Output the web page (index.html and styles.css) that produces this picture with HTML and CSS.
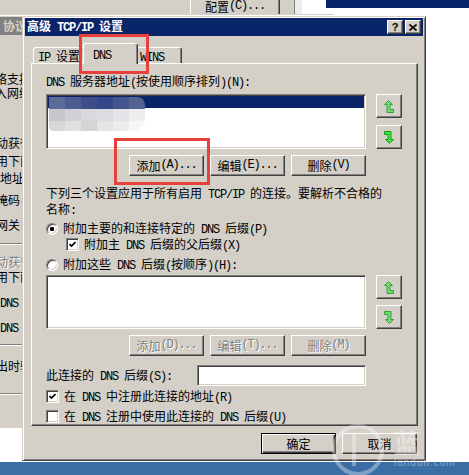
FILE: index.html
```html
<!DOCTYPE html>
<html>
<head>
<meta charset="UTF-8">
<title>高级 TCP/IP 设置</title>
<link rel="stylesheet" href="styles.css">
</head>
<body>

<!-- 后面的窗口 -->
<div class="win-back">
  <div class="btn cfg">配置<span class="en">(C)...</span></div>
</div>
<div class="strip-top"></div>

<div class="win-mid">
  <div class="mid-title">协议<span class="en"> (TCP/IP) </span>属性</div>
  <div class="ln l1">网络支持此功能，则可以获取自动指派的</div>
  <div class="ln l2">入网络系统管理员处获得适当的</div>
  <div class="ln l3">自动获得<span class="en"> IP </span>地址<span class="en">(O)</span></div>
  <div class="ln l4">使用下面的<span class="en"> IP </span>地址<span class="en">(S):</span></div>
  <div class="ln l5">地址<span class="en">(I):</span></div>
  <div class="ln l6">子网掩码<span class="en">(U):</span></div>
  <div class="ln l7">默认网关<span class="en">(D):</span></div>
  <div class="sep s1"></div>
  <div class="ln l8 dim">自动获得<span class="en"> DNS </span>服务器地址<span class="en">(B)</span></div>
  <div class="ln l9">使用下面的<span class="en"> DNS </span>服务器地址<span class="en">(E):</span></div>
  <div class="ln l10">首选<span class="en"> DNS </span>服务器<span class="en">(P):</span></div>
  <div class="ln l11">备用<span class="en"> DNS </span>服务器<span class="en">(A):</span></div>
  <div class="sep s2"></div>
  <div class="ln l12">退出时验证设置<span class="en">(V)</span></div>
  <div class="sep s3"></div>
</div>

<div class="taskbar"></div>

<!-- 高级 TCP/IP 设置 -->
<div class="dlg">
  <div class="caption">
    <span class="cap-text">高级<span class="en"> TCP/IP </span>设置</span>
    <span class="btn cap-btn">?</span>
    <span class="btn cap-btn">
      <svg width="8" height="7" viewBox="0 0 8 7"><path d="M0.5 0.5 L7.5 6.5 M7.5 0.5 L0.5 6.5" stroke="#000" stroke-width="1.6" fill="none"/></svg>
    </span>
  </div>

  <div class="dlg-body">
    <div class="tabs">
      <div class="tab t-ip"><span class="en">IP </span>设置</div>
      <div class="tab t-dns"><span class="en">DNS</span></div>
      <div class="tab t-wins"><span class="en">WINS</span></div>
    </div>

    <div class="panel">
      <div class="lbl"><span class="en">DNS </span>服务器地址<span class="en">(</span>按使用顺序排列<span class="en">)(N):</span></div>

      <div class="listrow">
        <div class="list">
          <div class="sel"></div>
          <div class="mosaic">
            <div class="mz1"></div>
            <div class="mz2"></div>
            <div class="mz3"></div>
          </div>
        </div>
        <div class="updown">
          <div class="btn sbtn">
            <svg width="10" height="13" viewBox="0 0 10 13"><path d="M4.5 0.5 L8.5 4.5 H6 V9.5 H9.5 V12.5 H3 V4.5 H0.5 Z" fill="#74dc74" stroke="#34a034"/></svg>
          </div>
          <div class="btn sbtn">
            <svg width="10" height="13" viewBox="0 0 10 13"><path d="M4.5 0.5 L8.5 4.5 H6 V9.5 H9.5 V12.5 H3 V4.5 H0.5 Z" fill="#3ee23e" stroke="#1c9a1c" transform="rotate(180 5 6.5)"/></svg>
          </div>
        </div>
      </div>

      <div class="btnrow">
        <div class="btn">添加<span class="en">(A)...</span></div>
        <div class="btn">编辑<span class="en">(E)...</span></div>
        <div class="btn">删除<span class="en">(V)</span></div>
      </div>

      <div class="note">下列三个设置应用于所有启用<span class="en"> TCP/IP </span>的连接。要解析不合格的<br>名称<span class="en">:</span></div>

      <div class="opt o1">
        <span class="radio on"></span>
        <span>附加主要的和连接特定的<span class="en"> DNS </span>后缀<span class="en">(P)</span></span>
      </div>
      <div class="opt o2">
        <span class="check">
          <svg width="7" height="7" viewBox="0 0 7 7"><path d="M0.5 3 L2.5 5 L6.5 1" stroke="#000" stroke-width="1.7" fill="none"/></svg>
        </span>
        <span>附加主<span class="en"> DNS </span>后缀的父后缀<span class="en">(X)</span></span>
      </div>
      <div class="opt o3">
        <span class="radio"></span>
        <span>附加这些<span class="en"> DNS </span>后缀<span class="en">(</span>按顺序<span class="en">)(H):</span></span>
      </div>

      <div class="listrow lr2">
        <div class="list"></div>
        <div class="updown">
          <div class="btn sbtn">
            <svg width="10" height="13" viewBox="0 0 10 13"><path d="M4.5 0.5 L8.5 4.5 H6 V9.5 H9.5 V12.5 H3 V4.5 H0.5 Z" fill="#74dc74" stroke="#34a034"/></svg>
          </div>
          <div class="btn sbtn">
            <svg width="10" height="13" viewBox="0 0 10 13"><path d="M4.5 0.5 L8.5 4.5 H6 V9.5 H9.5 V12.5 H3 V4.5 H0.5 Z" fill="#74dc74" stroke="#34a034" transform="rotate(180 5 6.5)"/></svg>
          </div>
        </div>
      </div>

      <div class="btnrow">
        <div class="btn off">添加<span class="en">(D)...</span></div>
        <div class="btn off">编辑<span class="en">(T)...</span></div>
        <div class="btn off">删除<span class="en">(M)</span></div>
      </div>

      <div class="suffix">
        <span>此连接的<span class="en"> DNS </span>后缀<span class="en">(S):</span></span>
        <div class="field"></div>
      </div>

      <div class="opt c1">
        <span class="check">
          <svg width="7" height="7" viewBox="0 0 7 7"><path d="M0.5 3 L2.5 5 L6.5 1" stroke="#000" stroke-width="1.7" fill="none"/></svg>
        </span>
        <span>在<span class="en"> DNS </span>中注册此连接的地址<span class="en">(R)</span></span>
      </div>
      <div class="opt c2">
        <span class="check"></span>
        <span>在<span class="en"> DNS </span>注册中使用此连接的<span class="en"> DNS </span>后缀<span class="en">(U)</span></span>
      </div>
    </div>

    <div class="foot">
      <div class="btn def">确定</div>
      <div class="btn">取消</div>
    </div>
  </div>
</div>

<!-- 标注 -->
<div class="mark mark-tab"></div>
<div class="mark mark-add"></div>

<div class="wm">
  <svg class="wm-logo" width="60" height="56" viewBox="0 0 60 56"><circle cx="30" cy="28" r="24" stroke="rgba(255,255,255,0.35)" stroke-width="4" fill="none"/><path d="M26 12 V44" stroke="rgba(255,255,255,0.35)" stroke-width="4"/></svg>
  <span class="wm-cn">蓝</span>
  <span class="wm-en">landun.com</span>
</div>

</body>
</html>
```

FILE: styles.css
```css
* {
  box-sizing: border-box;
}

body {
  margin: 0;
  width: 469px;
  height: 475px;
  position: relative;
  overflow: hidden;
  background: #fff;
  font-family: "Noto Sans CJK SC", sans-serif;
  font-size: 12px;
  line-height: 13px;
  color: #000;
}

/* 半角字符 (宋体 ASCII 6px 宽) */
.en {
  font-family: "Liberation Mono", monospace;
  letter-spacing: -1.2px;
}

/* 经典凸起按钮 */
.btn {
  display: flex;
  align-items: center;
  justify-content: center;
  white-space: nowrap;
  background: #d4d0c8;
  border: 1px solid;
  border-color: #fff #404040 #404040 #fff;
  box-shadow: inset -1px -1px #808080;
}

.btn.off {
  color: #808080;
  text-shadow: 1px 1px #fff;
}

.btn.def {
  border-color: #000;
  box-shadow: inset 1px 1px #fff, inset -1px -1px #404040, inset -2px -2px #808080;
}

/* 后面的窗口 */
.win-back {
  position: absolute;
  left: 0;
  top: -5px;
  width: 302px;
  height: 25px;
  padding-left: 190px;
  background: #d4d0c8;
  border-right: 7px solid #ececec;
  box-shadow: inset -1px 0 #808080;
}

.cfg {
  width: 90px;
  height: 23px;
}

.strip-top {
  position: absolute;
  left: 326px;
  top: 0;
  width: 143px;
  height: 8px;
  background: #0a246a;
}

.win-mid {
  position: absolute;
  left: 0;
  top: 14px;
  width: 334px;
  height: 414px;
  padding-top: 2px;
  background: #d4d0c8;
  border-top: 1px solid #d4d0c8;
  box-shadow: inset 0 1px #fff;
  overflow: hidden;
}

.mid-title {
  height: 18px;
  line-height: 18px;
  padding-left: 3px;
  background: #808080;
  color: #d4d0c8;
  font-weight: bold;
  white-space: nowrap;
}

.ln {
  height: 14px;
  line-height: 14px;
  white-space: nowrap;
}

.ln.dim {
  color: #808080;
  text-shadow: 1px 1px #fff;
}

.l1 { margin-top: 37px; text-indent: -17px; }
.l2 { text-indent: -5px; }
.l3 { margin-top: 36px; text-indent: -16px; }
.l4 { margin-top: 4px; text-indent: -16px; }
.l5 { margin-top: 3px; }
.l6 { margin-top: 8px; text-indent: -28px; }
.l7 { margin-top: 11px; text-indent: -28px; }
.l8 { margin-top: 10px; text-indent: -16px; }
.l9 { margin-top: 1px; text-indent: -16px; }
.l10 { margin-top: 11px; text-indent: -30px; }
.l11 { margin-top: 11px; text-indent: -30px; }
.l12 { margin-top: 13px; text-indent: -16px; }

.sep {
  height: 2px;
  border-top: 1px solid #808080;
  border-bottom: 1px solid #fff;
}

.s1 { margin-top: 11px; }
.s2 { margin-top: 10px; }
.s3 { margin-top: 20px; }

.taskbar {
  position: absolute;
  left: 0;
  top: 462px;
  width: 469px;
  height: 13px;
  background: #3a6ea5;
}

/* 对话框 */
.dlg {
  position: absolute;
  left: 22px;
  top: 16px;
  width: 404px;
  height: 445px;
  padding: 1px 2px 2px;
  background: #d4d0c8;
  border: 1px solid;
  border-color: #d4d0c8 #404040 #404040 #d4d0c8;
  box-shadow: inset 1px 1px #fff, inset -1px -1px #808080;
}

.caption {
  display: flex;
  align-items: center;
  height: 18px;
  padding: 0 2px;
  background: #0a246a;
  color: #fff;
  font-weight: bold;
}

.cap-text {
  flex: 1;
  white-space: nowrap;
}

.cap-btn {
  width: 16px;
  height: 14px;
  margin-left: 2px;
  color: #000;
  font-family: "Liberation Sans", sans-serif;
  font-size: 11px;
  font-weight: bold;
}

.dlg-body {
  padding: 7px 5px 0 6px;
}

/* 选项卡 */
.tabs {
  display: flex;
  align-items: flex-end;
  height: 20px;
  padding-left: 2px;
}

.tab {
  height: 16px;
  padding: 1px 0 0 4px;
  background: #d4d0c8;
  border: 1px solid;
  border-bottom: 0;
  border-color: #fff #404040 #404040 #fff;
  border-radius: 3px 3px 0 0;
  box-shadow: inset -1px 0 #808080;
  white-space: nowrap;
}

.t-ip {
  width: 52px;
}

.t-dns {
  position: relative;
  z-index: 1;
  width: 55px;
  height: 21px;
  margin: 0 -2px -1px;
  padding: 3px 0 0 9px;
}

.t-wins {
  width: 46px;
  padding-left: 3px;
}

.panel {
  height: 363px;
  padding: 10px 14px 0;
  border: 1px solid;
  border-color: #fff #404040 #404040 #fff;
  box-shadow: inset -1px -1px #808080;
}

.lbl {
  margin-bottom: 4px;
  white-space: nowrap;
}

.listrow {
  display: grid;
  grid-template-columns: 320px 26px;
  column-gap: 10px;
}

.list,
.field {
  position: relative;
  height: 55px;
  padding: 1px;
  background: #fff;
  border: 1px solid;
  border-color: #808080 #fff #fff #808080;
  box-shadow: inset 1px 1px #404040, inset -1px -1px #d4d0c8;
}

.sel {
  height: 12px;
  background: #0a246a;
}

/* 打码部分 */
.mosaic {
  position: absolute;
  left: 2px;
  top: 2px;
  width: 96px;
  border-radius: 0 8px 12px 4px;
  overflow: hidden;
}

.mz1 {
  height: 12px;
  background: linear-gradient(90deg, #5d6b98 0 16px, #4d5c90 16px 32px, #3d4e88 32px 48px, #34468a 48px 64px, #44548d 64px 80px, #53628f 80px 96px);
}

.mz2 {
  height: 12px;
  background: linear-gradient(90deg, #c6c6cc 0 16px, #d0d0d6 16px 32px, #d8d8dd 32px 48px, #dcdce0 48px 64px, #e4e4e8 64px 80px, #eeeef0 80px 96px);
}

.mz3 {
  height: 10px;
  background: linear-gradient(90deg, #d8d8d8 0 16px, #e0e0e0 16px 32px, #d4d4d6 32px 48px, #e4e4e4 48px 64px, #ececec 64px 80px, #f6f6f6 80px 96px);
}

.updown {
  display: flex;
  flex-direction: column;
  gap: 7px;
}

.sbtn {
  height: 24px;
}

.lr2 {
  margin-top: 4px;
}

.lr2 .list {
  height: 54px;
}

.lr2 .updown {
  gap: 6px;
}

.btnrow {
  display: flex;
  justify-content: flex-end;
  gap: 6px;
  width: 320px;
  margin-top: 6px;
}

.btnrow .btn,
.foot .btn {
  width: 75px;
  height: 21px;
}

.note {
  margin-top: 10px;
  white-space: nowrap;
}

/* 单选 / 复选 */
.opt {
  display: flex;
  align-items: center;
  gap: 5px;
  height: 13px;
  white-space: nowrap;
}

.o1 { margin-top: 4px; }
.o2 { margin-top: 3px; padding-left: 20px; }
.o3 { margin-top: 7px; }
.c1 { margin-top: 4px; }
.c2 { margin-top: 7px; }

.radio {
  position: relative;
  flex: none;
  width: 12px;
  height: 12px;
  border-radius: 50%;
  background: #fff;
  border: 1px solid;
  border-color: #808080 #fff #fff #808080;
  box-shadow: inset 1px 1px #404040, inset -1px -1px #d4d0c8;
}

.radio.on::after {
  content: "";
  position: absolute;
  left: 3px;
  top: 3px;
  width: 4px;
  height: 4px;
  border-radius: 1px;
  background: #000;
}

.check {
  display: flex;
  align-items: center;
  justify-content: center;
  flex: none;
  width: 13px;
  height: 13px;
  background: #fff;
  border: 1px solid;
  border-color: #808080 #fff #fff #808080;
  box-shadow: inset 1px 1px #404040, inset -1px -1px #d4d0c8;
}

.suffix {
  display: flex;
  align-items: center;
  width: 320px;
  height: 21px;
  margin-top: 9px;
  white-space: nowrap;
}

.field {
  width: 169px;
  height: 21px;
  margin-left: auto;
}

.foot {
  display: flex;
  justify-content: flex-end;
  gap: 6px;
  margin-top: 7px;
  padding-right: 1px;
}

/* 红色标注框 */
.mark {
  position: absolute;
  border: 3px solid #e8403c;
}

.mark-tab {
  left: 79px;
  top: 34px;
  width: 70px;
  height: 40px;
}

.mark-add {
  left: 114px;
  top: 138px;
  width: 96px;
  height: 47px;
}

/* 水印 */
.wm {
  position: absolute;
  left: 328px;
  top: 420px;
  width: 141px;
  height: 55px;
  color: rgba(255, 255, 255, 0.4);
}

.wm-logo {
  position: absolute;
  left: 0;
  top: 2px;
}

.wm-cn {
  position: absolute;
  left: 66px;
  top: 8px;
  font-size: 26px;
  line-height: 28px;
  font-weight: bold;
}

.wm-en {
  position: absolute;
  left: 66px;
  top: 36px;
  font-family: "Liberation Sans", sans-serif;
  font-size: 10px;
  letter-spacing: 1px;
}
```
